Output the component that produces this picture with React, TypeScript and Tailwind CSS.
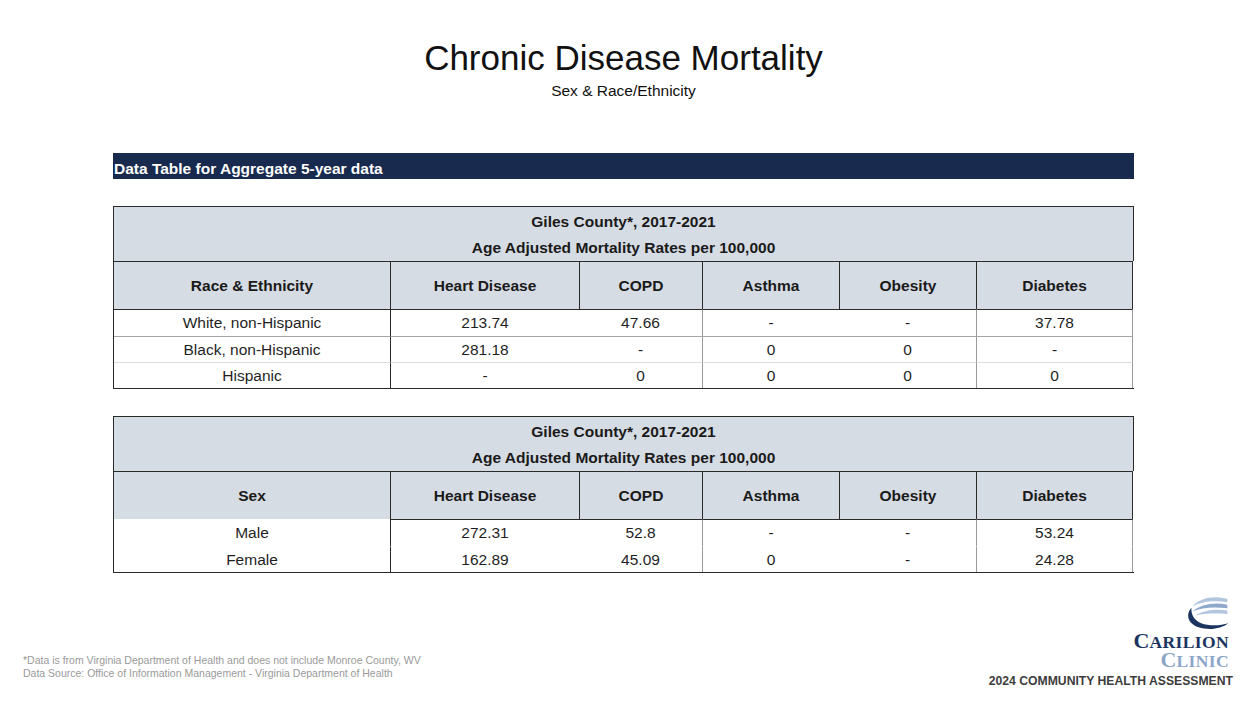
import React from "react";

const COLS = "grid-cols-[276px_189px_123px_137px_137px_157px]";
const HEAD = ["Heart Disease", "COPD", "Asthma", "Obesity", "Diabetes"];

type Row = string[];

function DataTable({ first, rows, sexTable }: { first: string; rows: Row[]; sexTable?: boolean }) {
  const dark = "border-[#2b2b2b]";
  return (
    <div className={`border-t border-l border-b ${dark} w-[1021px]`}>
      <div className={`h-[54px] bg-[#d6dce4] border-r ${dark} flex flex-col items-center justify-center font-bold text-[15.5px] text-[#1a1a1a]`}>
        <div className="h-[27px] leading-[27px] pt-[1px]">Giles County*, 2017-2021</div>
        <div className="h-[27px] leading-[27px]">Age Adjusted Mortality Rates per 100,000</div>
      </div>
      <div className={`grid ${COLS}`}>
        <div className={`h-[48px] bg-[#d6dce4] border-t ${dark} flex items-center justify-center font-bold text-[15.5px] text-[#1a1a1a]`}>{first}</div>
        {HEAD.map((h, i) => (
          <div
            key={h}
            className={`h-[48px] bg-[#d6dce4] border-t border-l ${dark} ${i === 4 ? "border-r" : ""} flex items-center justify-center font-bold text-[15.5px] text-[#1a1a1a]`}
          >
            {h}
          </div>
        ))}
        {rows.map((r, ri) => {
          const top =
            ri === 0
              ? "border-t border-t-[#2b2b2b]"
              : sexTable
              ? "border-t border-t-transparent"
              : ri === 1
              ? "border-t border-t-[#a6a6a6]"
              : "border-t border-t-[#dcdcdc]";
          return r.map((c, ci) => {
            let left = "";
            if (ci === 1) left = "border-l border-l-[#2b2b2b]";
            if (ci === 3 || ci === 5) left = "border-l border-l-[#9a9a9a]";
            const right = ci === 5 ? "border-r border-r-[#9a9a9a]" : "";
            const t = sexTable && ri === 0 && ci === 0 ? "border-t border-t-transparent" : top;
            return (
              <div
                key={ri + "-" + ci}
                className={`${ri === 0 ? "h-[27px]" : "h-[26px]"} ${t} ${left} ${right} flex items-center justify-center text-[15.5px] text-[#1f1f1f]`}
              >
                {c}
              </div>
            );
          });
        })}
      </div>
    </div>
  );
}

function Logo() {
  return (
    <div className="flex flex-col items-end">
      <svg width="48" height="35" viewBox="0 0 48 36" className="mr-[3px] mb-[1px]">
        <path d="M46 3 C32 -1 17 2 10 11 C18 6 31 4 46 6.5 Z" fill="#b3c6e0" />
        <path d="M46 9 C32 6 18 9 10 16 C19 12 31 11 46 12.5 Z" fill="#8fa9cd" />
        <path d="M46 15 C34 13 21 15 13 20 C22 18 33 17.5 46 18.5 Z" fill="#b3c6e0" />
        <path d="M9 12 C2 20 6 31 22 33.5 C32 35 41 32.5 47 28 C39 30.5 27 31 19 28 C12 25 8.5 19 9 12 Z" fill="#1c3560" />
      </svg>
      <div className="font-['Liberation_Serif',serif] font-bold text-[#1c3560] text-[22px] leading-[17px] mr-[4px]">
        <span>C</span>
        <span className="text-[17.5px] tracking-[0.4px]">ARILION</span>
      </div>
      <div className="font-['Liberation_Serif',serif] font-bold text-[#8ca6c9] text-[22px] leading-[17px] mr-[4px]">
        <span>C</span>
        <span className="text-[17.5px] tracking-[0.4px]">LINIC</span>
      </div>
      <div className="font-bold text-[12.2px] text-[#3d3d3d] leading-[14px] mt-[4px]">2024 COMMUNITY HEALTH ASSESSMENT</div>
    </div>
  );
}

export default function App() {
  const race: Row[] = [
    ["White, non-Hispanic", "213.74", "47.66", "-", "-", "37.78"],
    ["Black, non-Hispanic", "281.18", "-", "0", "0", "-"],
    ["Hispanic", "-", "0", "0", "0", "0"],
  ];
  const sex: Row[] = [
    ["Male", "272.31", "52.8", "-", "-", "53.24"],
    ["Female", "162.89", "45.09", "0", "-", "24.28"],
  ];
  return (
    <div className="w-[1247px] h-[702px] bg-white flex flex-col overflow-hidden font-['Liberation_Sans',Arial,sans-serif] text-black">
      <div className="pt-[38px] text-center text-[35px] leading-[40px] text-[#111]">Chronic Disease Mortality</div>
      <div className="mt-[4px] text-center text-[15.5px] leading-[18px] text-[#111]">Sex &amp; Race/Ethnicity</div>
      <div className="ml-[113px] mt-[53px] w-[1021px]">
        <div className="h-[26px] bg-[#182a4e] flex items-end pl-[1px] pb-[1px]">
          <span className="text-white font-bold text-[15.5px] leading-[18px]">Data Table for Aggregate 5-year data</span>
        </div>
        <div className="mt-[27px]">
          <DataTable first="Race & Ethnicity" rows={race} />
        </div>
        <div className="mt-[27px]">
          <DataTable first="Sex" rows={sex} sexTable />
        </div>
      </div>
      <div className="mt-auto flex items-end justify-between pl-[23px] pr-[14px] pb-[14px]">
        <div className="text-[10.5px] leading-[13px] text-[#9a9a9a] pb-[8px]">
          <div>*Data is from Virginia Department of Health and does not include Monroe County, WV</div>
          <div>Data Source: Office of Information Management - Virginia Department of Health</div>
        </div>
        <Logo />
      </div>
    </div>
  );
}
